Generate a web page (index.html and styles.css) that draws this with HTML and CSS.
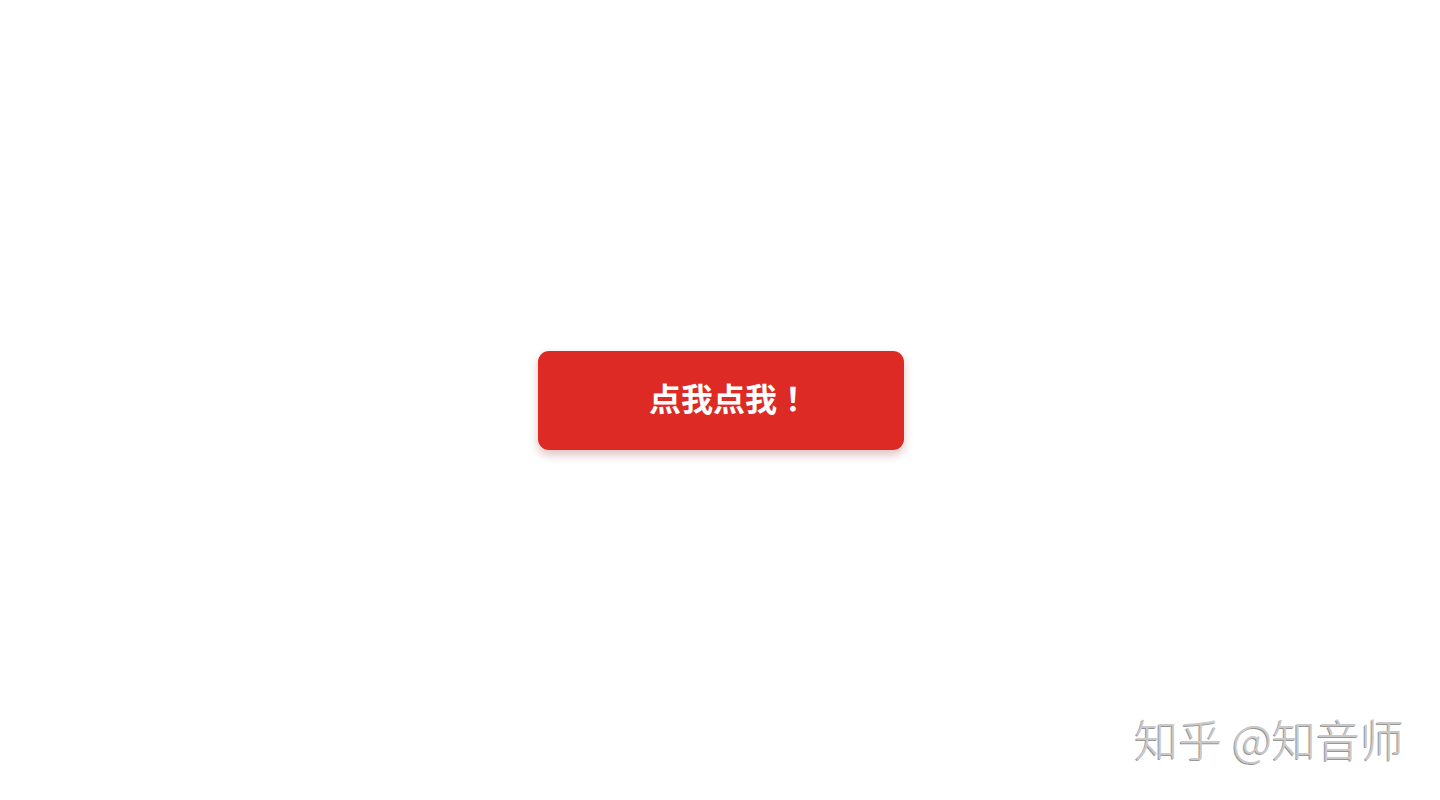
FILE: index.html
```html
<!DOCTYPE html>
<html lang="zh-CN">
<head>
<meta charset="utf-8">
<link rel="stylesheet" href="styles.css">
</head>
<body>
<main class="stage">
  <button class="cta">点我点我<span class="bang">！</span></button>
</main>
<div class="watermark">知乎 @知音师</div>
</body>
</html>
```
FILE: styles.css
```css
html, body {
  margin: 0;
  padding: 0;
  background: #ffffff;
}
.stage {
  width: 1440px;
  height: 800px;
  display: flex;
  align-items: center;
  justify-content: center;
}
.cta {
  width: 366px;
  height: 99px;
  border: none;
  border-radius: 11px;
  background: #dd2a24;
  color: #ffffff;
  font-family: "Noto Sans CJK SC", sans-serif;
  font-weight: 700;
  font-size: 32px;
  line-height: 1;
  text-spacing-trim: space-all;
  font-feature-settings: "fwid" 1;
  box-shadow: 0 5px 10px rgba(140, 40, 30, 0.28);
  cursor: pointer;
  padding: 0 0 6px 16px;
  margin-left: 2px;
}
.bang {
  font-family: "Noto Sans CJK TC", sans-serif;
  display: inline-block;
  width: 1em;
  text-align: center;
}
.watermark {
  position: absolute;
  right: 36px;
  bottom: 40px;
  font-family: "Noto Sans CJK SC", sans-serif;
  font-weight: 300;
  font-size: 44px;
  line-height: 1;
  color: #c9c9c9;
  text-shadow: -1px 1px 0 #979797, 1px -1px 0 #ffffff;
  white-space: pre;
}
```
